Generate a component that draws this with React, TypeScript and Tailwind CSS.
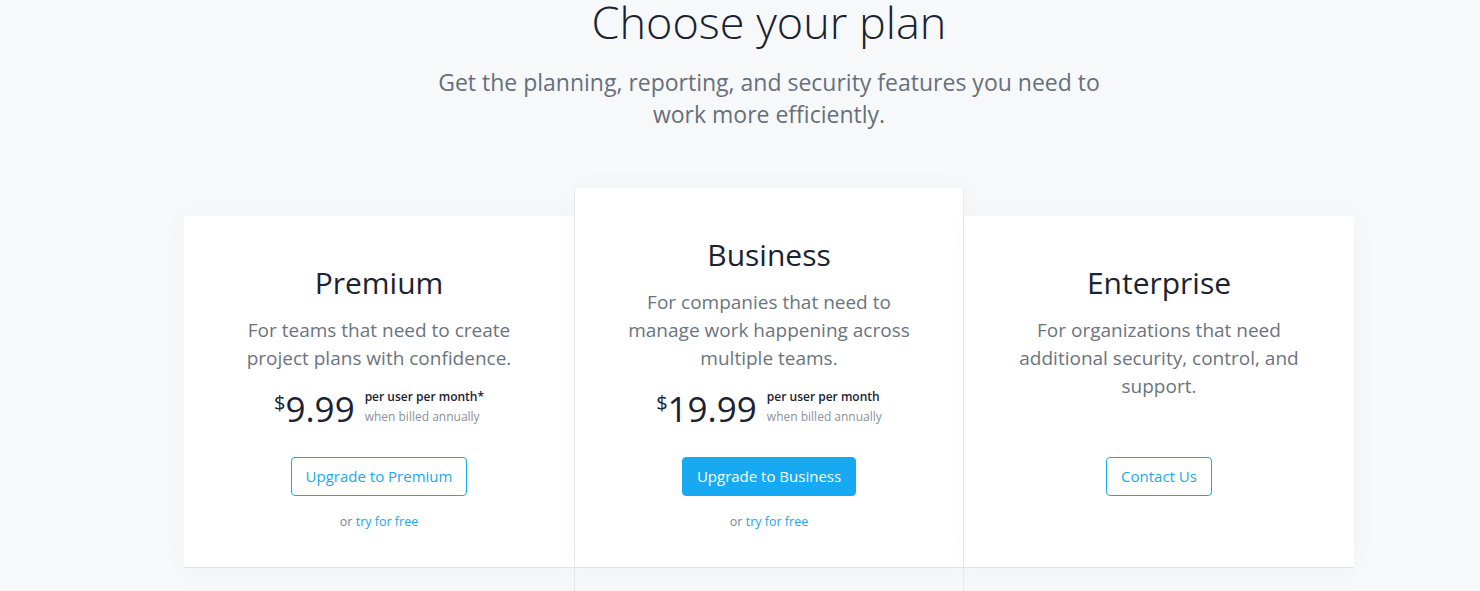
import React from "react";

const font = { fontFamily: '"Open Sans", "Noto Sans", sans-serif' };

function Price({ amount, star }: { amount: string; star?: boolean }) {
  return (
    <div className="mt-[17px] flex items-start justify-center gap-[10px]">
      <div className="flex items-start text-[#1b2232]">
        <span className="mt-[4px] text-[20px] leading-none">$</span>
        <span className="text-[35px] leading-[40px]">{amount}</span>
      </div>
      <div className="mt-[-2px] flex flex-col items-start text-left">
        <span className="text-[12px] font-semibold leading-[20px] text-[#1b2232]">
          per user per month{star ? "*" : ""}
        </span>
        <span className="text-[12px] leading-[20px] text-[#8a929c]">when billed annually</span>
      </div>
    </div>
  );
}

function Card({
  title,
  desc,
  price,
  star,
  button,
  filled,
  link,
  tall,
  border,
}: {
  title: string;
  desc: string[];
  price?: string;
  star?: boolean;
  button: string;
  filled?: boolean;
  link?: boolean;
  tall?: boolean;
  border?: boolean;
}) {
  return (
    <div
      className={`flex w-[390px] flex-col items-center bg-white pt-[48px] text-center shadow-[0_0_30px_rgba(0,0,0,0.025)] ${
        tall ? "h-[379px] rounded-t-[4px]" : "h-[351px]"
      } ${border ? "border-x border-[#e6e8eb]" : ""}`}
    >
      <h2 className="text-[30px] leading-[38px] text-[#1b2232]">{title}</h2>
      <div className="mt-[14px] text-[19px] leading-[28px] text-[#6b7480]">
        {desc.map((d) => (
          <div key={d}>{d}</div>
        ))}
      </div>
      {price && <Price amount={price} star={star} />}
      <div className="mt-auto flex flex-col items-center pb-[35px]">
        <button
          className={`h-[39px] rounded-[4px] border px-[14px] text-[15px] ${
            filled
              ? "border-[#17a9f1] bg-[#17a9f1] text-white"
              : "border-[#17a9f1] bg-white text-[#17a9f1]"
          }`}
        >
          {button}
        </button>
        <div className={`mt-[16px] h-[20px] text-[12.5px] leading-[20px] ${link ? "" : "invisible"}`}>
          <span className="text-[#7c8590]">or </span>
          <span className="text-[#1ba6ee]">try for free</span>
        </div>
      </div>
    </div>
  );
}

export default function App() {
  return (
    <div className="min-h-[591px] w-full overflow-hidden bg-[#f7f8fa]" style={font}>
      <div className="ml-[184px] w-[1170px]">
        <div className="flex flex-col items-center text-center">
          <h1 className="mt-[-8px] text-[45px] font-light leading-[60px] text-[#1b2232]">Choose your plan</h1>
          <p className="mt-[14px] text-[23px] leading-[32px] text-[#66707c]">
            Get the planning, reporting, and security features you need to
            <br />
            work more efficiently.
          </p>
        </div>
        <div className="mt-[58px]">
          <div className="flex items-end">
            <Card
              title="Premium"
              desc={["For teams that need to create", "project plans with confidence."]}
              price="9.99"
              star
              button="Upgrade to Premium"
              link
            />
            <Card
              title="Business"
              desc={["For companies that need to", "manage work happening across", "multiple teams."]}
              price="19.99"
              button="Upgrade to Business"
              filled
              link
              tall
              border
            />
            <Card
              title="Enterprise"
              desc={["For organizations that need", "additional security, control, and", "support."]}
              button="Contact Us"
            />
          </div>
          <div className="flex h-[40px] border-t border-[#e3e5e8] bg-[#f6f7f9]">
            <div className="w-[390px]" />
            <div className="w-[390px] border-x border-[#e6e8eb]" />
            <div className="w-[390px]" />
          </div>
        </div>
      </div>
    </div>
  );
}
